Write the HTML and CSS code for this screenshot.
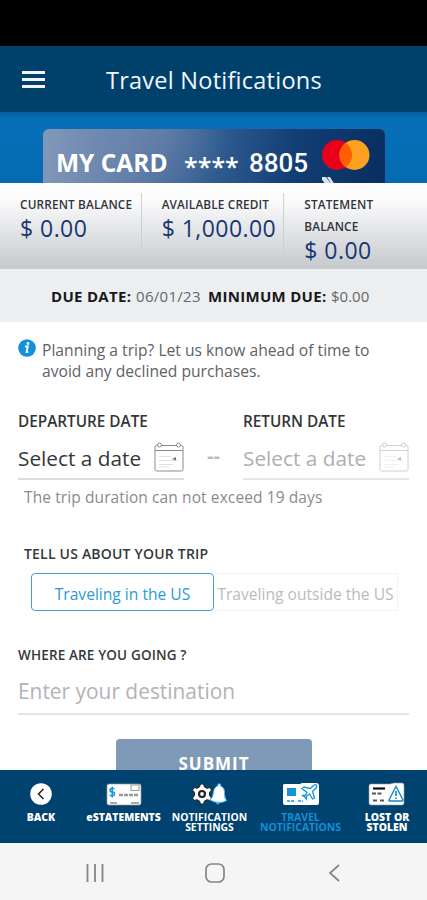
FILE: index.html
```html
<!DOCTYPE html>
<html lang="en">
<head>
<meta charset="utf-8">
<title>Travel Notifications</title>
<link rel="stylesheet" href="styles.css">
</head>
<body>
<div class="phone">
  <div class="status"></div>
  <header class="header">
    <svg class="menu" width="23" height="17" viewBox="0 0 23 17"><path d="M0 1.500h23M0 8.500h23M0 15.500h23" stroke="#f5f3ff" stroke-width="3"/></svg>
    <h1>Travel Notifications</h1>
  </header>
  <section class="hero">
    <div class="card">
      <span class="card-name">MY CARD</span>
      <span class="stars">****</span>
      <span class="digits">8805</span>
      <svg class="brand" width="50" height="50" viewBox="0 0 50 50">
        <circle cx="15" cy="17" r="15" fill="#eb001b"/><circle cx="32.500" cy="17" r="15" fill="#fba01f"/>
        <path d="M23.750 4.800a15 15 0 0 1 0 24.400a15 15 0 0 1 0-24.400z" fill="#ff5f00"/>
        <path d="M-2 39h6l6 8H4zM5 39h3l5 8h-3z" fill="#d9e3ee"/>
      </svg>
    </div>
  </section>
  <section class="balances">
    <div class="balance"><span class="label">CURRENT BALANCE</span><span class="amount">$ 0.00</span></div>
    <div class="balance"><span class="label">AVAILABLE CREDIT</span><span class="amount">$ 1,000.00</span></div>
    <div class="balance"><span class="label">STATEMENT<br>BALANCE</span><span class="amount">$ 0.00</span></div>
  </section>
  <section class="due"><b class="due-date">DUE DATE:</b><span class="due-value">06/01/23</span><b class="min-due">MINIMUM DUE:</b><span class="min-value">$0.00</span></section>
  <main class="content">
    <div class="tip">
      <svg width="18" height="18" viewBox="0 0 18 18"><circle cx="9" cy="9" r="8.800" fill="#148fdc"/><path d="M7 7.500h2.700L8.600 13h1.700" fill="none" stroke="#fff" stroke-width="1.900"/><circle cx="10" cy="4.500" r="1.400" fill="#fff"/></svg>
      <p>Planning a trip? Let us know ahead of time to<br>avoid any declined purchases.</p>
    </div>
    <div class="dates">
      <div class="date">
        <span class="field-label">DEPARTURE DATE</span>
        <div class="picker"><span>Select a date</span>
          <svg width="30" height="31" viewBox="0 0 30 31" fill="none" stroke="#8a8a8a"><path d="M4 3.500H2.500Q1 3.500 1 5v22.500Q1 29 2.500 29h25q1.500 0 1.500-1.500V5q0-1.500-1.500-1.500H26M7 3.500h16M1 8.500h28"/><circle cx="5.500" cy="3" r="2"/><circle cx="24.500" cy="3" r="2"/><path d="M5 14.500h12M5 18.500h19M5 22.500h14M5 25h10" stroke="#e2e2e2"/><path d="M18 17l4-2v3.500z" fill="#777" stroke="none"/></svg>
        </div>
      </div>
      <span class="dash">--</span>
      <div class="date disabled">
        <span class="field-label">RETURN DATE</span>
        <div class="picker"><span>Select a date</span>
          <svg width="30" height="31" viewBox="0 0 30 31" fill="none" stroke="#d0d0d0"><path d="M4 3.500H2.500Q1 3.500 1 5v22.500Q1 29 2.500 29h25q1.500 0 1.500-1.500V5q0-1.500-1.500-1.500H26M7 3.500h16M1 8.500h28"/><circle cx="5.500" cy="3" r="2"/><circle cx="24.500" cy="3" r="2"/><path d="M5 14.500h12M5 18.500h19M5 22.500h14M5 25h10" stroke="#f0f0f0"/><path d="M18 17l4-2v3.500z" fill="#bbb" stroke="none"/></svg>
        </div>
      </div>
    </div>
    <p class="hint">The trip duration can not exceed 19 days</p>
    <h2 class="trip-title">TELL US ABOUT YOUR TRIP</h2>
    <div class="toggle"><div class="option active">Traveling in the US</div><div class="option">Traveling outside the US</div></div>
    <h2 class="where-title">WHERE ARE YOU GOING ?</h2>
    <div class="destination">Enter your destination</div>
    <div class="submit">SUBMIT</div>
  </main>
  <nav class="tabs">
    <div class="tab t1"><svg width="38" height="24" viewBox="0 0 38 24"><circle cx="19" cy="12" r="10.800" fill="#fff"/><path d="M21.500 7l-5 5 5 5" fill="none" stroke="#222" stroke-width="1.500"/></svg><span>BACK</span></div>
    <div class="tab t2"><svg width="38" height="24" viewBox="0 0 38 24"><rect x="2" y="2" width="34" height="21" rx="2" fill="#fff" stroke="#999" stroke-width=".7"/><path d="M9.500 6.500H7Q5 6.500 5 8.200T7 10h.7q1.800 0 1.800 1.800T7.700 13.500H4.500M7.200 4.500v11" stroke="#1295d8" stroke-width="1.500" fill="none"/><path d="M14 13h20" stroke="#999" stroke-width="2.600" stroke-dasharray="4 1"/><path d="M5 21h7M26 21h8" stroke="#aaa" stroke-width="2"/><rect x="26" y="3" width="8" height="5.500" fill="#fff" stroke="#999"/></svg><span>eSTATEMENTS</span></div>
    <div class="tab t3"><svg width="38" height="24" viewBox="0 0 38 24"><path d="M9.500 2h3l1 3 2.500 1.300 3-.8 1.500 2.500-2 2.500v3l2 2.500-1.500 2.500-3-.8-2.500 1.300-1 3h-3l-1-3L6 17.700l-3 .8L1.500 16l2-2.500v-3L1.500 8 3 5.500l3 .8L8.500 5z" fill="#fff" stroke="#222"/><circle cx="11" cy="12" r="4" fill="#222"/><circle cx="11" cy="12" r="1.900" fill="#fff"/><path d="M19 18q3-2 3.500-8 1-5.500 4.500-6.200V2h2.500v2q4.500 1.500 4 8 0 4 2 6.500-3 2-7 2-5 0-9.500-2.500z" fill="#fff" stroke="#42b9f5"/><path d="M24.500 20.500q2 4 5 0z" fill="#42b9f5"/></svg><span>NOTIFICATION<br>SETTINGS</span></div>
    <div class="tab t4"><svg width="38" height="24" viewBox="0 0 38 24"><path d="M2 2h16l2-1h14q3 0 3 3v17q0 2-2 2H3q-2 0-2-2V4q0-2 1-2z" fill="#fff"/><rect x="5" y="6" width="9" height="8" fill="#1295d8"/><path d="M5 19h8M16 19h5" stroke="#1295d8" stroke-width="1.500" stroke-dasharray="3 1"/><path d="M34 3q2 2-1 4l-2.500 2.500 2 6.500-2 1-3-5-3 2v3l-1.500-2-3-1.500h3l2-3-5-4 2-1.500 6 1.500L31 4q2-2 3-1z" fill="#fff" stroke="#1295d8" stroke-width="1.300"/></svg><span>TRAVEL<br>NOTIFICATIONS</span></div>
    <div class="tab t5"><svg width="38" height="24" viewBox="0 0 38 24"><path d="M3 2h19l4-1h8q2 0 2 2v18q0 2-2 2H3q-2 0-2-2V4q0-2 2-2z" fill="#fff" stroke="#999" stroke-width=".6"/><path d="M5 6.500h12" stroke="#111" stroke-width="2.200"/><path d="M4 11.500h11M5 18.500h4M12 18.500h5" stroke="#555" stroke-width="2" stroke-dasharray="4 1.500"/><path d="M28 4.500l7 13.500q0 1-1 1H22q-1.500 0-1-1z" fill="#fff" stroke="#1686c6" stroke-width="1.400"/><path d="M28 9v5M28 15.500v1.500" stroke="#1686c6" stroke-width="1.600"/></svg><span>LOST OR<br>STOLEN</span></div>
  </nav>
  <footer class="system">
    <svg width="18" height="18" viewBox="0 0 18 18"><path d="M1.500 0v18M9 0v18M16.500 0v18" stroke="#858585" stroke-width="1.800"/></svg>
    <svg class="home" width="20" height="20" viewBox="0 0 20 20"><rect x="1" y="1" width="18" height="18" rx="5.500" fill="none" stroke="#858585" stroke-width="1.700"/></svg>
    <svg width="12" height="18" viewBox="0 0 12 18"><path d="M11 1L2 9l9 8" fill="none" stroke="#858585" stroke-width="1.700"/></svg>
  </footer>
</div>
</body>
</html>
```
FILE: styles.css
```css
* { box-sizing: border-box; }
body { margin: 0; font-family: "Open Sans", "Noto Sans", sans-serif; }
h1, h2, p { margin: 0; font-weight: 400; }
svg { flex: none; display: block; }
.phone { width: 427px; height: 900px; display: flex; flex-direction: column; overflow: hidden; background: #fff; white-space: nowrap; }
.phone > * { flex: none; }
.status { height: 46px; background: #000; }
.header { height: 66px; display: flex; align-items: center; padding: 1px 0 0 22px; background: #00416c; }
.header h1 { margin-left: 61px; font-size: 23.5px; letter-spacing: .25px; color: #f3f6ff; }
.hero { height: 71px; padding: 17px 42px 0 43px; background: linear-gradient(#07609f, #066fb8 8px, #056bb1); overflow: hidden; }
.card { height: 54px; display: flex; padding: 10px 0 0 13px; border-radius: 6px 6px 0 0; color: #fff; background: radial-gradient(circle at 35% 0, #8094b455, transparent 30%), linear-gradient(97deg, #8298ba 0, #6580aa 25%, #315d91 50%, #123f75 72%, #092e5f 100%); overflow: hidden; line-height: 48px; }
.card-name { width: 128px; font-size: 24.5px; font-weight: 700; }
.stars { width: 65px; font-size: 25px; font-weight: 600; line-height: 54px; }
.digits { width: 73px; font: 500 26px/49px Roboto, sans-serif; }
.brand { margin-top: -1px; }
.balances { height: 86px; display: flex; padding: 10px 0 0 20px; background: linear-gradient(#fff 0, #fbfbfc 20%, #c5c8cc 100%); }
.balance { width: 122px; height: 59px; display: flex; flex-direction: column; align-items: flex-start; border-right: 1px solid #cdd0d3; }
.balance + .balance { width: 143px; padding-left: 20px; }
.balance:last-child { border: 0; }
.label { font-size: 11.8px; font-weight: 600; line-height: 22px; letter-spacing: .15px; color: #30343a; }
.amount { margin-top: -1px; font-size: 23px; line-height: 28px; letter-spacing: .45px; color: #173773; }
.due { height: 53px; display: flex; align-items: center; padding-left: 51px; font-size: 15px; background: #edeef0; color: #65676b; }
.due b { color: #17191d; font-weight: 700; letter-spacing: .3px; }
.due-date { width: 85px; }
.due-value { width: 72px; letter-spacing: .3px; }
.min-due { width: 123px; }
.content { height: 448px; overflow: hidden; padding: 17px 18px 0; }
.tip { display: flex; gap: 6px; font-size: 15.65px; line-height: 21px; color: #606266; }
.tip p { margin-top: 1px; }
.dates { display: flex; justify-content: space-between; margin-top: 28px; }
.date { width: 166px; }
.field-label { font-size: 15.3px; line-height: 22px; font-weight: 600; color: #333538; }
.picker { height: 48px; display: flex; justify-content: space-between; align-items: center; padding-top: 5px; border-bottom: 2px solid #ddd; font-size: 20.8px; color: #35373a; }
.disabled .picker { color: #adafb2; border-color: #e6e6e6; }
.dash { padding-top: 37px; font: 700 20px/18px "Open Sans", sans-serif; color: #bbb; }
.hint { margin: 6px 0 0 6px; font-size: 15.5px; line-height: 22px; letter-spacing: .1px; color: #898b8e; }
.trip-title { margin: 35px 0 0 6px; font-size: 14px; line-height: 22px; font-weight: 600; letter-spacing: .2px; color: #36383b; }
.toggle { display: flex; margin: 8px 0 0 13px; height: 38px; }
.option { width: 184px; display: flex; justify-content: center; align-items: center; padding-top: 4px; border: 1px solid #f3f3f3; border-left: 0; font-size: 15.6px; color: #b9bbbd; }
.option.active { width: 183px; border: 1.500px solid #479fd1; border-radius: 4px; color: #2b9ad6; }
.where-title { margin-top: 33px; font-size: 13.500px; line-height: 22px; font-weight: 600; letter-spacing: .15px; color: #36383b; }
.destination { height: 49px; border-bottom: 2px solid #e5e5e5; font-size: 20.900px; line-height: 50px; color: #b2b4b6; }
.submit { width: 196px; height: 58px; margin: 24px 0 0 98px; padding-top: 13px; border-radius: 4px; text-align: center; background: #7f9ab6; color: #fff; font-size: 17px; line-height: 24px; font-weight: 700; letter-spacing: 1px; }
.tabs { height: 73px; display: flex; padding: 12px 0 0; background: #004270; color: #fff; }
.tab { display: flex; flex-direction: column; align-items: center; gap: 6px; text-align: center; font-size: 10.4px; line-height: 10px; font-weight: 800; }
.t1 { width: 82px; } .t2 { width: 83px; } .t3 { width: 89px; } .t4 { width: 93px; color: #168fd4; } .t5 { width: 80px; }
.t3, .t4 { font-weight: 700; }
.system { height: 57px; display: flex; justify-content: space-between; align-items: center; padding: 2px 87px 0 86px; background: #f5f5f6; }
.home { margin-right: 3px; }
```
